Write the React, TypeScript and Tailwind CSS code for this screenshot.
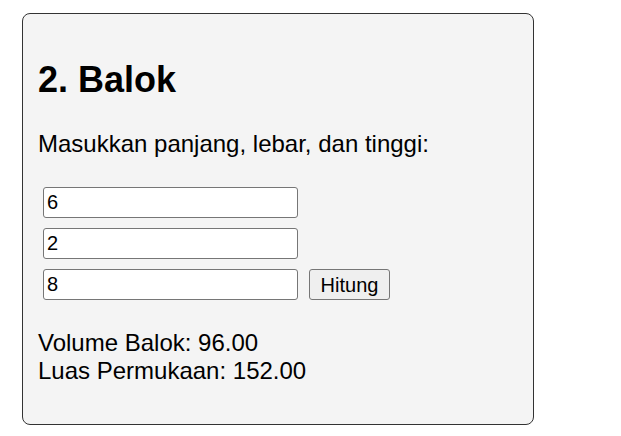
import {useState} from "react";

export default function App() {
  const [panjang, setPanjang] = useState("6");
  const [lebar, setLebar] = useState("2");
  const [tinggi, setTinggi] = useState("8");
  const [hasil, setHasil] = useState({volume: 96, luas: 152});

  const hitung = () => {
    const p = parseFloat(panjang) || 0;
    const l = parseFloat(lebar) || 0;
    const t = parseFloat(tinggi) || 0;
    setHasil({volume: p * l * t, luas: 2 * (p * l + p * t + l * t)});
  };

  const inputClass =
    "w-[255px] h-[31px] border border-[#767676] rounded-[3px] bg-white px-[3px] text-[20px] text-black outline-none";

  return (
    <div className="min-h-screen bg-white pt-[13px] pl-[22px] font-['Liberation_Sans',Arial,sans-serif] text-black">
      <div className="w-[512px] border border-[#333333] rounded-[8px] bg-[#f4f4f4] px-[15px] pt-[15px] pb-[39px]">
        <h2 className="mt-[30px] text-[36px] font-bold leading-[41px]">2. Balok</h2>
        <p className="mt-[30px] text-[24px] leading-[28px]">Masukkan panjang, lebar, dan tinggi:</p>

        <div className="mt-[29px] ml-[5px] flex flex-col gap-[10px]">
          <input className={inputClass} type="text" value={panjang} onChange={e => setPanjang(e.target.value)} />
          <input className={inputClass} type="text" value={lebar} onChange={e => setLebar(e.target.value)} />
          <div className="flex items-center gap-[11px]">
            <input className={inputClass} type="text" value={tinggi} onChange={e => setTinggi(e.target.value)} />
            <button
              onClick={hitung}
              className="w-[81px] h-[31px] border border-[#767676] rounded-[3px] bg-[#efefef] text-[20px] leading-none text-black"
            >
              Hitung
            </button>
          </div>
        </div>

        <div className="mt-[29px] text-[24px] leading-[28px]">
          <div>Volume Balok: {hasil.volume.toFixed(2)}</div>
          <div>Luas Permukaan: {hasil.luas.toFixed(2)}</div>
        </div>
      </div>
    </div>
  );
}
